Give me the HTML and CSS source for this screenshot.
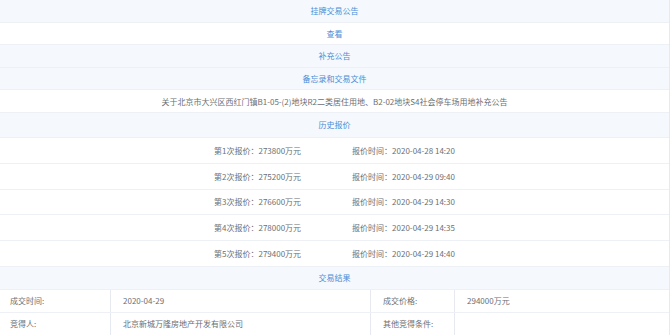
FILE: index.html
```html
<!DOCTYPE html>
<html lang="zh-CN">
<head>
    <meta charset="UTF-8">
    <title>交易详情</title>
    <link rel="stylesheet" href="styles.css">
</head>
<body>

<div class="detail">
    <div class="row head link">挂牌交易公告</div>
    <div class="row link">查看</div>
    <div class="row head link">补充公告</div>
    <div class="row head link">备忘录和交易文件</div>
    <div class="row">关于北京市大兴区西红门镇B1-05-(2)地块R2二类居住用地、B2-02地块S4社会停车场用地补充公告</div>

    <div class="row head link tall">历史报价</div>
    <div class="row bid"><span>第1次报价：273800万元</span><span>报价时间：2020-04-28 14:20</span></div>
    <div class="row bid"><span>第2次报价：275200万元</span><span>报价时间：2020-04-29 09:40</span></div>
    <div class="row bid"><span>第3次报价：276600万元</span><span>报价时间：2020-04-29 14:30</span></div>
    <div class="row bid"><span>第4次报价：278000万元</span><span>报价时间：2020-04-29 14:35</span></div>
    <div class="row bid"><span>第5次报价：279400万元</span><span>报价时间：2020-04-29 14:40</span></div>

    <div class="row head link">交易结果</div>
    <div class="result">
        <div class="cell">成交时间:</div>
        <div class="cell">2020-04-29</div>
        <div class="cell">成交价格:</div>
        <div class="cell">294000万元</div>
    </div>
    <div class="result">
        <div class="cell">竞得人:</div>
        <div class="cell">北京新城万隆房地产开发有限公司</div>
        <div class="cell">其他竞得条件:</div>
        <div class="cell"></div>
    </div>
</div>

</body>
</html>
```

FILE: styles.css
```css
body {
    margin: 0;
    padding: 0;
    background-color: #ffffff;
    font-family: "Noto Sans CJK SC", "Liberation Sans", sans-serif;
    font-size: 8px;
    color: #6b6f75;
}
.detail {
    width: 670px;
    box-sizing: border-box;
    border-right: 1px solid #e6e9ef;
}
.row {
    height: 22.6px;
    box-sizing: border-box;
    border-bottom: 1px solid #edf0f5;
    display: flex;
    align-items: center;
    justify-content: center;
    background-color: #ffffff;
}
.row.head {
    background-color: #f5f8fc;
}
.row.link {
    color: #4a8fd6;
}
.row.tall {
    height: 25px;
}
.bid {
    height: 25.8px;
    gap: 51px;
}
.result {
    display: grid;
    grid-template-columns: 111px 260px 84px 1fr;
    height: 23px;
    box-sizing: border-box;
    border-bottom: 1px solid #edf0f5;
}
.result .cell {
    display: flex;
    align-items: center;
    padding-left: 12px;
    border-right: 1px solid #e6e9ef;
}
.result .cell:first-child {
    padding-left: 10px;
}
.result .cell:last-child {
    border-right: none;
}
```
